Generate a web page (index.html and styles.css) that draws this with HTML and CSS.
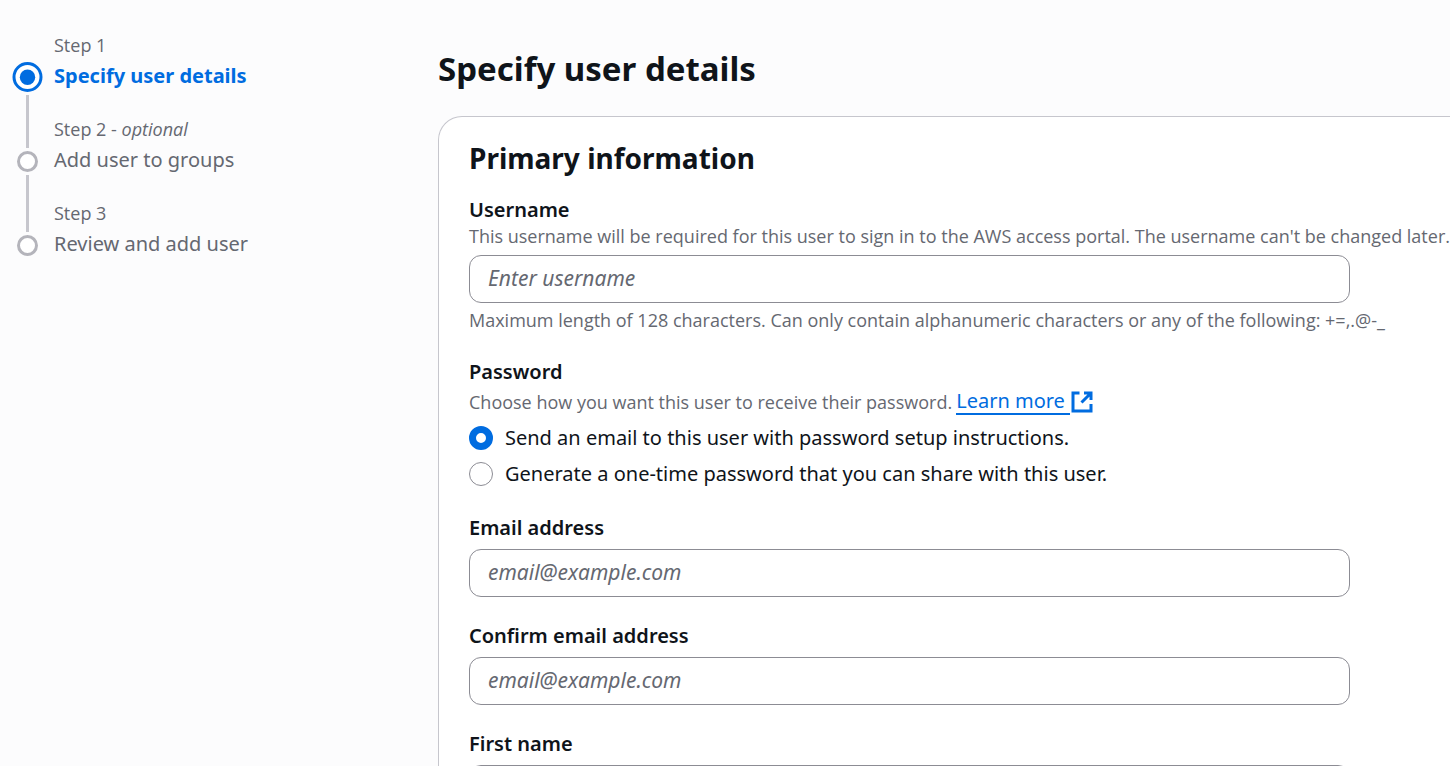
FILE: index.html
```html
<!DOCTYPE html>
<html lang="en">
<head>
<meta charset="utf-8">
<meta name="viewport" content="width=device-width, initial-scale=1">
<title>Specify user details</title>
<link rel="stylesheet" href="styles.css">
</head>
<body>
<div class="wizard">
  <nav class="steps" aria-label="Steps">
    <ol class="step-list">
      <li class="step step-active" aria-current="step">
        <span class="step-label">Step 1</span>
        <svg class="step-marker" viewBox="0 0 31 30" aria-hidden="true"><circle cx="15.5" cy="15" r="13.5" fill="#fff" stroke="#006ce0" stroke-width="3"/><circle cx="15.5" cy="15.300" r="7.700" fill="#006ce0"/></svg>
        <span class="step-title">Specify user details</span>
        <span class="step-line step-line-after"></span>
      </li>
      <li class="step">
        <span class="step-line step-line-before"></span>
        <span class="step-label">Step 2 - <em>optional</em></span>
        <svg class="step-marker" viewBox="0 0 31 30" aria-hidden="true"><path d="M14 0h3v2h-3zM14 29h3v1h-3z" fill="#c6c6cd"/><circle cx="15.5" cy="15.5" r="9" fill="#fff" stroke="#b4b4bb" stroke-width="3"/></svg>
        <span class="step-title">Add user to groups</span>
        <span class="step-line step-line-after"></span>
      </li>
      <li class="step">
        <span class="step-line step-line-before"></span>
        <span class="step-label">Step 3</span>
        <svg class="step-marker" viewBox="0 0 31 30" aria-hidden="true"><path d="M14 0h3v2h-3z" fill="#c6c6cd"/><circle cx="15.5" cy="15.5" r="9" fill="#fff" stroke="#b4b4bb" stroke-width="3"/></svg>
        <span class="step-title">Review and add user</span>
      </li>
    </ol>
  </nav>
  <main class="content">
    <h1 class="page-title">Specify user details</h1>
    <form class="card">
      <h2 class="card-title">Primary information</h2>
      <div class="field">
        <label class="label" for="username">Username</label>
        <p class="hint" id="username-desc">This username will be required for this user to sign in to the AWS access portal. The username can't be changed later.</p>
        <input class="input" id="username" type="text" placeholder="Enter username" aria-describedby="username-desc username-rule">
        <p class="hint hint-below" id="username-rule">Maximum length of 128 characters. Can only contain alphanumeric characters or any of the following: +=,.@-_</p>
      </div>
      <fieldset class="field">
        <legend class="label">Password</legend>
        <p class="hint hint-link"><span>Choose how you want this user to receive their password.</span> <a class="link" href="#"><span class="link-text">Learn more</span><svg class="link-icon" viewBox="0 0 24 24" aria-hidden="true"><path d="M9.500 3H3v18h18v-7M14 3h7v7M20.500 3.500l-9 9" fill="none" stroke="currentColor" stroke-width="3"/></svg></a></p>
        <div class="radios">
          <label class="radio-row" for="send-email"><input class="radio" id="send-email" type="radio" name="password" checked>Send an email to this user with password setup instructions.</label>
          <label class="radio-row" for="one-time"><input class="radio" id="one-time" type="radio" name="password">Generate a one-time password that you can share with this user.</label>
        </div>
      </fieldset>
      <div class="field">
        <label class="label label-gap" for="email">Email address</label>
        <input class="input" id="email" type="email" placeholder="email@example.com">
      </div>
      <div class="field">
        <label class="label label-gap" for="confirm">Confirm email address</label>
        <input class="input" id="confirm" type="email" placeholder="email@example.com">
      </div>
      <div class="field">
        <label class="label label-gap" for="first">First name</label>
        <input class="input" id="first" type="text">
      </div>
    </form>
  </main>
</div>
</body>
</html>
```
FILE: styles.css
```css
* { box-sizing: border-box; }
body {
  margin: 0;
  background: #fcfcfd;
  color: #0f141a;
  font-family: "Noto Sans", "Open Sans", sans-serif;
  font-size: 20px;
  line-height: 30px;
}
.wizard {
  display: grid;
  grid-template-columns: 426px minmax(0, 1fr);
  padding-left: 12px;
  height: 100vh;
  overflow: hidden;
}
.step-list { list-style: none; margin: 0; padding: 32px 0 0; }
.step {
  display: grid;
  grid-template-columns: 31px 1fr;
  grid-template-rows: 30px 30px 24px;
  column-gap: 11px;
  color: #656871;
}
.step-label { grid-area: 1 / 2; font-family: "Open Sans", "Noto Sans", sans-serif; font-size: 18px; line-height: 26px; }
.step-title { grid-area: 2 / 2; line-height: 28px; }
.step-marker { grid-area: 2 / 1; width: 31px; height: 30px; }
.step-line { width: 3px; margin-left: 14px; background: #c6c6cd; }
.step-line-before { grid-area: 1 / 1; }
.step-line-after { grid-area: 3 / 1; }
.step-active .step-line-after { margin-top: 3px; }
.step-active .step-title { color: #006ce0; font-weight: 700; }
.page-title { margin: 0; padding: 47px 0 26px; font-size: 33px; line-height: 43px; font-weight: 700; }
.card {
  background: #fff;
  border: 1px solid #c6c6cd;
  border-right: 0;
  border-radius: 24px 0 0 0;
  padding: 24px 0 30px 30px;
}
.card-title { margin: 0 0 20px; font-size: 28px; line-height: 34px; font-weight: 700; }
.field { border: 0; margin: 0 0 24px; padding: 0; min-width: 0; }
.label { display: block; padding: 0; font-weight: 600; }
.label-gap { margin-bottom: 6px; }
.hint { margin: 0 0 8px; color: #656871; font-family: "Open Sans", "Noto Sans", sans-serif; font-size: 18px; line-height: 22px; white-space: nowrap; }
.hint-below { margin: 6px 0 26px; }
.hint-link { display: flex; align-items: center; gap: 4px; margin-bottom: 6px; line-height: 30px; }
.input {
  display: block;
  width: 100%;
  max-width: 881px;
  height: 48px;
  padding: 0 18px 2px;
  border: 1px solid #8c8c94;
  border-radius: 12px;
  background: #fff;
  color: #0f141a;
  font: inherit;
  font-size: 21px;
}
.input::placeholder { color: #656871; font-style: italic; opacity: 1; }
.link { display: inline-flex; align-items: center; color: #006ce0; font-family: "Noto Sans", "Open Sans", sans-serif; font-size: 20px; line-height: 24px; text-decoration: none; }
.link-text { border-bottom: 2px solid #006ce0; padding-right: 5px; }
.link-icon { width: 24px; height: 24px; }
.radios { display: grid; gap: 6px; }
.radio-row { display: flex; align-items: center; gap: 12px; }
.radio {
  appearance: none;
  flex: none;
  width: 24px;
  height: 24px;
  margin: 0;
  border: 1px solid #8c8c94;
  border-radius: 50%;
  background: #fff;
}
.radio:checked { border: 7px solid #006ce0; }
```
